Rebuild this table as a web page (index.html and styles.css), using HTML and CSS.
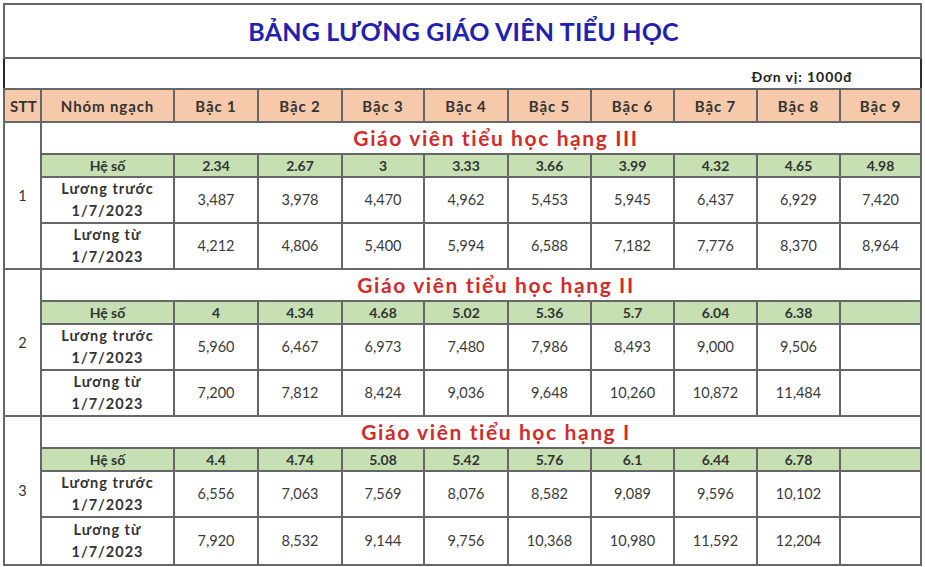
FILE: index.html
```html
<!DOCTYPE html>
<html lang="vi">
<head>
<meta charset="utf-8">
<title>Bảng lương giáo viên tiểu học</title>
<link rel="stylesheet" href="styles.css">
</head>
<body>
<table class="sheet">
  <colgroup>
    <col class="c-stt"><col class="c-nhom">
    <col class="c-b1"><col class="c-b2"><col class="c-b3"><col class="c-b4"><col class="c-b5">
    <col class="c-b6"><col class="c-b7"><col class="c-b8"><col class="c-b9">
  </colgroup>
  <tr class="r-title"><td colspan="11" class="title">BẢNG LƯƠNG GIÁO VIÊN TIỂU HỌC</td></tr>
  <tr class="r-unit">
    <td colspan="8" class="blank"></td>
    <td colspan="3" class="unit">Đơn vị: 1000đ</td>
  </tr>
  <tr class="r-head">
    <th class="stt">STT</th><th>Nhóm ngạch</th>
    <th>Bậc 1</th><th>Bậc 2</th><th>Bậc 3</th><th>Bậc 4</th><th>Bậc 5</th>
    <th>Bậc 6</th><th>Bậc 7</th><th>Bậc 8</th><th>Bậc 9</th>
  </tr>

  <tr class="r-group"><td rowspan="4" class="num">1</td><td colspan="10" class="group">Giáo viên tiểu học hạng III</td></tr>
  <tr class="r-coef"><td>Hệ số</td><td>2.34</td><td>2.67</td><td>3</td><td>3.33</td><td>3.66</td><td>3.99</td><td>4.32</td><td>4.65</td><td>4.98</td></tr>
  <tr class="r-sal"><td class="lbl">Lương trước<br>1/7/2023</td><td>3,487</td><td>3,978</td><td>4,470</td><td>4,962</td><td>5,453</td><td>5,945</td><td>6,437</td><td>6,929</td><td>7,420</td></tr>
  <tr class="r-sal"><td class="lbl">Lương từ<br>1/7/2023</td><td>4,212</td><td>4,806</td><td>5,400</td><td>5,994</td><td>6,588</td><td>7,182</td><td>7,776</td><td>8,370</td><td>8,964</td></tr>

  <tr class="r-group"><td rowspan="4" class="num">2</td><td colspan="10" class="group">Giáo viên tiểu học hạng II</td></tr>
  <tr class="r-coef"><td>Hệ số</td><td>4</td><td>4.34</td><td>4.68</td><td>5.02</td><td>5.36</td><td>5.7</td><td>6.04</td><td>6.38</td><td></td></tr>
  <tr class="r-sal"><td class="lbl">Lương trước<br>1/7/2023</td><td>5,960</td><td>6,467</td><td>6,973</td><td>7,480</td><td>7,986</td><td>8,493</td><td>9,000</td><td>9,506</td><td></td></tr>
  <tr class="r-sal"><td class="lbl">Lương từ<br>1/7/2023</td><td>7,200</td><td>7,812</td><td>8,424</td><td>9,036</td><td>9,648</td><td>10,260</td><td>10,872</td><td>11,484</td><td></td></tr>

  <tr class="r-group"><td rowspan="4" class="num">3</td><td colspan="10" class="group">Giáo viên tiểu học hạng I</td></tr>
  <tr class="r-coef"><td>Hệ số</td><td>4.4</td><td>4.74</td><td>5.08</td><td>5.42</td><td>5.76</td><td>6.1</td><td>6.44</td><td>6.78</td><td></td></tr>
  <tr class="r-sal"><td class="lbl">Lương trước<br>1/7/2023</td><td>6,556</td><td>7,063</td><td>7,569</td><td>8,076</td><td>8,582</td><td>9,089</td><td>9,596</td><td>10,102</td><td></td></tr>
  <tr class="r-sal r-last"><td class="lbl">Lương từ<br>1/7/2023</td><td>7,920</td><td>8,532</td><td>9,144</td><td>9,756</td><td>10,368</td><td>10,980</td><td>11,592</td><td>12,204</td><td></td></tr>
</table>
</body>
</html>
```

FILE: styles.css
```css
html, body {
  margin: 0;
  padding: 0;
  background: #ffffff;
}
body {
  padding: 3px 0 0 3px;
  font-family: Lato, "Open Sans", "Noto Sans", sans-serif;
  color: #333333;
}
.sheet {
  border-collapse: collapse;
  table-layout: fixed;
  width: 918px;
  border: 2px solid #2a2a2a;
}
.c-stt { width: 37px; }
.c-nhom { width: 133px; }
.c-b1, .c-b2, .c-b4 { width: 84px; }
.c-b3 { width: 82px; }
.c-b5, .c-b6, .c-b7, .c-b8 { width: 83px; }
.c-b9 { width: 81px; }

.sheet td, .sheet th {
  border: 2px solid #666666;
  padding: 0;
  text-align: center;
  vertical-align: middle;
  font-size: 14px;
  line-height: 18px;
  overflow: visible;
  white-space: nowrap;
}
.sheet .r-title { height: 54px; }
.sheet .title {
  color: #1f22b0;
  font-size: 25px;
  line-height: 30px;
  letter-spacing: 0.2px;
  font-weight: 700;
  padding-left: 2px;
}
.sheet .r-unit { height: 31px; }
.sheet .r-unit td { border-left: none; border-right: none; }
.sheet .unit {
  font-size: 14px;
  letter-spacing: 0.9px;
  font-weight: 700;
  color: #222;
  text-align: right;
  vertical-align: bottom;
  padding-bottom: 2px;
  padding-right: 68px;
}
.sheet .r-head { height: 33px; }
.sheet .r-head th {
  background: #f6c9aa;
  font-size: 15px;
  letter-spacing: 0.9px;
  font-weight: 700;
  color: #333;
}
.sheet .r-head .stt { text-align: left; padding-left: 5px; letter-spacing: 0.3px; }
.sheet .r-group { height: 32px; }
.sheet .group {
  color: #d42a2a;
  font-size: 21px;
  line-height: 24px;
  letter-spacing: 1.6px;
  font-weight: 700;
  padding-left: 30px;
}
.sheet .num { font-size: 14.5px; }
.sheet .r-coef { height: 23px; }
.sheet .r-coef td {
  background: #c6e0b4;
  font-weight: 700;
  color: #333;
}
.sheet .r-sal { height: 46px; }
.sheet .r-last { height: 48px; }
.sheet .r-sal td { color: #3a3a3a; font-size: 14.5px; }
.sheet .r-sal .lbl {
  font-weight: 700;
  font-size: 14.5px;
  letter-spacing: 1px;
  line-height: 22px;
  color: #333;
}
```
